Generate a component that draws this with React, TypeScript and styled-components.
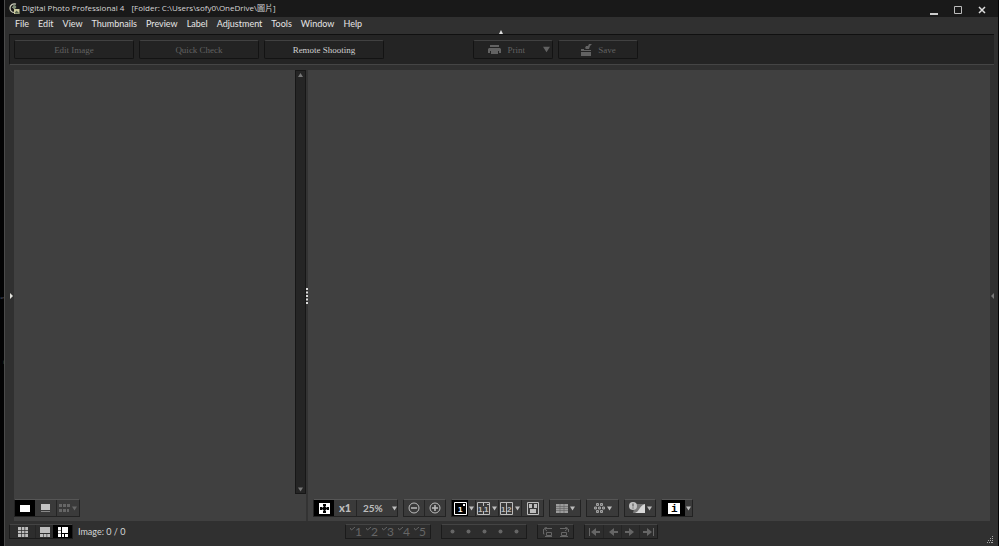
import React from "react";
import styled, { createGlobalStyle, css } from "styled-components";

const Global = createGlobalStyle`
  * { box-sizing: border-box; }
  html, body { margin: 0; background: #000; }
  body { font-family: Lato, "Noto Sans CJK TC", sans-serif; font-size: 9px; color: #d6d6d6; }
  button { font: inherit; color: inherit; padding: 0; margin: 0; border: 0; background: none; }
  svg { display: block; flex: none; }
`;

const Desktop = styled.div`
  min-height: 100vh;
  display: flex;
  background: #030304;
`;
const Behind = styled.div`
  width: 4px;
  flex: none;
  display: flex;
  flex-direction: column;
  align-items: flex-end;
  padding-top: 292px;
  gap: 52px;
  font-size: 4px;
  line-height: 12px;
  color: #6f7688;
`;
const Frame = styled.div`
  flex: 1;
  min-width: 0;
  display: flex;
  flex-direction: column;
  margin-right: 1px;
  border-left: 1px solid #4a4a4a;
  background: #303030;
`;
const TitleBar = styled.header`
  height: 17px;
  display: flex;
  align-items: center;
  gap: 2px;
  padding: 0 10px 0 4px;
  background: #191919;
`;
const Title = styled.h1`
  flex: 1;
  margin: 0;
  padding-bottom: 2px;
  display: flex;
  gap: 7px;
  font-family: "Open Sans", "Noto Sans CJK TC", sans-serif;
  font-size: 8px;
  line-height: 14px;
  font-weight: 400;
  white-space: nowrap;
`;
const WindowButtons = styled.div`
  display: flex;
  gap: 12px;
`;
const WindowButton = styled.button`
  width: 12px;
  height: 15px;
  display: grid;
  place-items: end center;
`;
const MenuBar = styled.nav`
  height: 17px;
  display: flex;
  align-items: center;
  gap: 9px;
  padding: 0 10px 3px;
`;
const MenuItem = styled.button`
  && { font-size: 9px; line-height: 14px; color: #e6e6e6; }
`;
const Ribbon = styled.div`
  position: relative;
  height: 31px;
  margin: 0 4px 5px;
  display: flex;
  align-items: center;
  gap: 5px;
  padding: 0 4px;
  background: #242424;
  border-top: 1px solid #101010;
  border-bottom: 1px solid #454545;
  border-left: 1px solid #151515;
`;
const Collapse = styled.button`
  position: absolute;
  top: -5px;
  left: 50%;
  width: 4px;
  height: 4px;
  && { margin-left: -3px; }
`;
const RibbonButton = styled.button<{ $width: number; $gap?: number; $menu?: boolean }>`
  && {
    width: ${(p) => p.$width}px;
    height: 19px;
    margin-left: ${(p) => p.$gap ?? 0}px;
    display: flex;
    align-items: center;
    justify-content: ${(p) => (p.$menu ? "flex-end" : "center")};
    gap: 6px;
    padding-right: ${(p) => (p.$menu ? 2 : 0)}px;
    border: 1px solid #131313;
    border-top-color: #414141;
    border-radius: 2px;
    background: #232323;
    color: #d0d0d0;
    font-family: "Liberation Serif", serif;
    font-size: 9px;
    line-height: 14px;
  }
  &&:disabled { color: #626262; }
`;
const PrintCaret = styled.span`
  margin-left: 12px;
`;
const Workspace = styled.main`
  flex: 1;
  display: flex;
  margin: 0 4px;
`;
const panel = css`
  display: flex;
  flex-direction: column;
  background: #404040;
`;
const ThumbPanel = styled.section`
  ${panel}
  width: 292px;
  flex: none;
  margin-left: 1px;
`;
const ThumbArea = styled.div`
  flex: 1;
  display: flex;
  justify-content: flex-end;
`;
const ScrollBar = styled.div`
  width: 11px;
  display: flex;
  flex-direction: column;
  justify-content: space-between;
  background: #252525;
  border: 1px solid #171717;
`;
const ScrollButton = styled.button`
  height: 8px;
  display: grid;
  place-items: center;
  && { color: #777; }
`;
const Splitter = styled.div`
  width: 2px;
  flex: none;
  display: flex;
  align-items: center;
  background: #333;
`;
const PreviewPanel = styled.section`
  ${panel}
  flex: 1;
  min-width: 0;
`;
const Canvas = styled.div`
  flex: 1;
`;
const Tools = styled.div<{ $left?: number }>`
  display: flex;
  gap: 5px;
  padding: 5px 0 4px ${(p) => p.$left ?? 0}px;
`;
const Group = styled.div<{ $flat?: boolean; $pad?: number }>`
  display: flex;
  height: ${(p) => (p.$flat ? 15 : 18)}px;
  padding: 0 ${(p) => p.$pad ?? 0}px;
  border: 1px solid ${(p) => (p.$flat ? "#1b1b1b" : "#232323")};
  border-top-color: ${(p) => (p.$flat ? "#444" : "#555")};
  background: ${(p) => (p.$flat ? "#2d2d2d" : "#3a3a3a")};
`;
const Tool = styled.button<{ $width: number; $active?: boolean; $line?: boolean; $tight?: boolean }>`
  && {
    width: ${(p) => p.$width}px;
    display: flex;
    align-items: center;
    justify-content: center;
    gap: ${(p) => (p.$tight ? 0 : 2)}px;
    font-size: 10px;
    line-height: 12px;
    color: ${(p) => (p.$active ? "#fff" : "#bdbdbd")};
    background: ${(p) => (p.$active ? "#000" : "transparent")};
    border-left: ${(p) => (p.$line ? "1px solid #252525" : "0")};
  }
  &&:disabled { color: #666; }
`;
const Zoom = styled.span`
  flex: 1;
  padding-left: 6px;
  font-weight: 700;
  text-align: left;
`;
const Bold = styled.b`
  font-weight: 900;
  font-size: 11px;
`;
const Mark = styled.span`
  font-size: 12px;
`;
const StatusBar = styled.footer`
  height: 25px;
  display: grid;
  grid-template-columns: 1fr auto 1fr;
  align-items: start;
  padding: 3px 4px 0;
`;
const StatusLeft = styled.div`
  display: flex;
  align-items: center;
  gap: 5px;
`;
const StatusCenter = styled.div`
  display: flex;
  gap: 10px;
`;
const Grip = styled.div`
  align-self: end;
  justify-self: end;
  padding-bottom: 3px;
  color: #a8a8a8;
`;
const EdgeHandle = styled.button<{ $dim?: boolean }>`
  width: 4px;
  align-self: center;
  flex: none;
  && { color: ${(p) => (p.$dim ? "#777" : "#e2e2dc")}; }
`;
const Digit = styled.text`
  font: 700 8px "Liberation Sans", sans-serif;
`;

const Caret = ({ w = 5 }: { w?: number }) => (
  <svg width={w} height={w} viewBox="0 0 5 5" aria-hidden="true"><path d="M0 .5h5L2.5 4.5z" fill="currentColor" /></svg>
);
const Logo = () => (
  <svg width="11" height="12" viewBox="0 0 11 12" aria-hidden="true">
    <path d="M7 1.2C4 .2 1 2 1 5s2 4.5 4.5 4.4" fill="none" stroke="#c7c7b4" strokeWidth="1.3" />
    <path d="M5 1v4.5M3 4l3 2" stroke="#97a18e" />
    <circle cx="5.5" cy="4" r="1.8" fill="#7d8b72" />
    <path d="M5 6h5.5v5H5z" fill="#cdcb9c" /><path d="M6 9.5l1.5-2 3 3H6z" fill="#596650" />
  </svg>
);
const Printer = () => (
  <svg width="13" height="10" viewBox="0 0 13 10" aria-hidden="true">
    <path d="M2 0h9v2H2zM1 3h11l1 1v4H0V4z" fill="currentColor" />
    <path d="M2 6h9v4H2z" fill="#232323" /><path d="M3 6h7v3H3z" fill="currentColor" />
  </svg>
);
const SaveIcon = () => (
  <svg width="12" height="12" viewBox="0 0 12 12" fill="currentColor" aria-hidden="true">
    <path d="M1 8h10v4H1zM1 5h3v1h7v1H1zM5 4l1-2h2l1-2 3 0-2 2-1 3H6z" />
  </svg>
);
const Grid = () => (
  <svg width="10" height="10" viewBox="0 0 10 10" fill="currentColor" aria-hidden="true">
    <path d="M0 0h3v3H0zM3.7 0h2.8v3H3.7zM7.2 0H10v3H7.2zM0 3.7h3v2.6H0zM3.7 3.7h2.8v2.6H3.7zM7.2 3.7H10v2.6H7.2zM0 7h3v3H0zM3.7 7h2.8v3H3.7zM7.2 7H10v3H7.2z" />
  </svg>
);
const Below = () => (
  <svg width="10" height="10" viewBox="0 0 10 10" fill="currentColor" aria-hidden="true">
    <path d="M0 0h10v6H0zM0 7h3v3H0zM3.6 7h3v3h-3zM7.2 7H10v3H7.2z" />
  </svg>
);
const Side = () => (
  <svg width="10" height="10" viewBox="0 0 10 10" fill="currentColor" aria-hidden="true">
    <path d="M0 0h3v3H0zM0 3.6h3v2.8H0zM0 7h3v3H0zM4 0h6v6H4zM4 7h2v3H4zM7 7h3v3H7z" />
  </svg>
);
const Single = () => <svg width="10" height="7" aria-hidden="true"><path d="M0 0h10v7H0z" fill="currentColor" /></svg>;
const Captioned = () => (
  <svg width="9" height="8" aria-hidden="true"><path d="M0 0h9v6H0z" fill="#c4c4c4" /><path d="M0 7h9v1H0z" fill="#888" /></svg>
);
const Fit = () => (
  <svg width="11" height="11" viewBox="0 0 11 11" aria-hidden="true">
    <path d="M0 0h11v11H0z" fill="currentColor" />
    <path d="M4 1h3v2l-1 1H5L4 3zM4 10h3V8L6 7H5L4 8zM1 4v3h2l1-1V5L3 4zM10 4v3H8L7 6V5l1-1zM4 4h3v3H4z" fill="#000" />
  </svg>
);
const Circle = ({ plus }: { plus?: boolean }) => (
  <svg width="12" height="12" viewBox="0 0 12 12" fill="none" stroke="currentColor" aria-hidden="true">
    <circle cx="6" cy="6" r="5" /><path d={plus ? "M3 6h6M6 3v6" : "M3 6h6"} strokeWidth="1.5" />
  </svg>
);
const Frame1 = () => (
  <svg width="13" height="13" viewBox="0 0 13 13" fill="currentColor" aria-hidden="true">
    <path d="M.5 .5h12v12H.5z" fill="none" stroke="currentColor" /><Digit x="4" y="10">1</Digit><path d="M9 2h2v2H9z" />
  </svg>
);
const Frame2 = ({ second, dot }: { second: string; dot?: boolean }) => (
  <svg width="13" height="13" viewBox="0 0 13 13" fill="currentColor" aria-hidden="true">
    <path d={dot ? "M.5 .5h12v12H.5zM6.5 0v4M6.5 9v4" : "M.5 .5h12v12H.5zM6.5 0v13"} fill="none" stroke="currentColor" />
    <Digit x="1" y="10">1</Digit><Digit x="7" y="10">{second}</Digit>
    {dot && <path d="M10 2h2v1h-2z" />}
  </svg>
);
const Sync = () => (
  <svg width="12" height="13" viewBox="0 0 12 13" aria-hidden="true">
    <path d="M.5 .5h11v12H.5z" fill="none" stroke="currentColor" /><path d="M2 2h3v4H2zM7 2h3v4H7zM3 7h6v4H3z" fill="currentColor" />
  </svg>
);
const Lines = () => (
  <svg width="12" height="9" viewBox="0 0 12 9" aria-hidden="true">
    <path d="M0 0h12v9H0z" fill="#9c9c9c" /><path d="M0 2.5h12M0 4.5h12M0 6.5h12M4 0v9M8 0v9" stroke="#606060" strokeWidth=".6" />
  </svg>
);
const Focus = () => (
  <svg width="11" height="10" viewBox="0 0 11 10" fill="#6a6a6a" stroke="#a2a2a2" aria-hidden="true">
    <path d="M2.5 .5h2v2h-2zM6.5 .5h2v2h-2zM.5 4h2v2h-2zM4.5 4h2v2h-2zM8.5 4h2v2h-2zM2.5 7.5h2v2h-2zM6.5 7.5h2v2h-2z" />
  </svg>
);
const Warning = () => (
  <svg width="16" height="12" viewBox="0 0 16 12" aria-hidden="true">
    <path d="M6 2h10v9H4z" fill="#777" /><path d="M16 2v9H5c5 0 5-7 11-9z" fill="#d8d8d8" />
    <circle cx="4" cy="4" r="4" fill="#c2c2c2" /><path d="M4 1.5v3M4 5.5v1" stroke="#444" />
  </svg>
);
const Info = () => (
  <svg width="12" height="11" viewBox="0 0 12 11" aria-hidden="true">
    <path d="M0 0h12v11H0z" fill="#fff" /><text x="3" y="9" fill="#000" fontFamily="Liberation Mono, monospace" fontSize="11" fontWeight="700">i</text>
  </svg>
);
const MiniThumbs = () => (
  <svg width="11" height="8" viewBox="0 0 11 8" aria-hidden="true"><path d="M0 0h3v3H0zM4 0h3v3H4zM8 0h3v3H8zM0 5h3v3H0zM4 5h3v3H4zM8 5h2v3H8z" fill="currentColor" /></svg>
);
const Tick = () => (
  <svg width="5" height="9" viewBox="0 0 5 9" fill="none" stroke="currentColor" aria-hidden="true"><path d="M0 1l1.5 2L5 0" /></svg>
);
const Dot = () => <svg width="5" height="5" aria-hidden="true"><circle cx="2.5" cy="2.5" r="2" fill="currentColor" /></svg>;
const Rotate = ({ right }: { right?: boolean }) => (
  <svg width="11" height="10" viewBox="0 0 11 10" fill="none" stroke="currentColor" aria-hidden="true">
    {right ? <path d="M1 1.5h7M6 0l3 1.5L6 4M9.5 2v3M2.5 5.5h5v3h-5zM1 9.5h8" /> : <path d="M10 1.5H3M5 0L2 1.5 5 4M1.5 2v5h1M4.5 5.5h5v3h-5zM3 9.5h7" />}
  </svg>
);
const Nav = ({ right, end }: { right?: boolean; end?: boolean }) => (
  <svg width="11" height="8" viewBox="0 0 11 8" fill="currentColor" aria-hidden="true">
    <path d={right ? "M0 3h4V0l5 4-5 4V5H0z" : "M11 3H7V0L2 4l5 4V5h4z"} />{end && <path d={right ? "M10 0h1v8h-1z" : "M0 0h1v8H0z"} />}
  </svg>
);

const menus = ["File", "Edit", "View", "Thumbnails", "Preview", "Label", "Adjustment", "Tools", "Window", "Help"];
const marks = [1, 2, 3, 4, 5];

export default function App() {
  return (
    <Desktop>
      <Global />
      <Behind aria-hidden="true"><span>er</span><span>|</span></Behind>
      <Frame>
        <TitleBar>
          <Logo />
          <Title><span>Digital Photo Professional 4</span><span>[Folder: C:\Users\sofy0\OneDrive\圖片]</span></Title>
          <WindowButtons>
            <WindowButton aria-label="Minimize"><svg width="8" height="8" stroke="#ccc" fill="none"><path d="M0 6h8" strokeWidth="2" /></svg></WindowButton>
            <WindowButton aria-label="Maximize"><svg width="9" height="11" stroke="#bbb" fill="none"><path d="M.5 1.5h7v7h-7z" /></svg></WindowButton>
            <WindowButton aria-label="Close"><svg width="8" height="10" stroke="#ddd" fill="none"><path d="M1 1l6 6M7 1L1 7" strokeWidth="1.5" /></svg></WindowButton>
          </WindowButtons>
        </TitleBar>
        <MenuBar>{menus.map((m) => <MenuItem key={m}>{m}</MenuItem>)}</MenuBar>
        <Ribbon>
          <RibbonButton $width={120} disabled>Edit Image</RibbonButton>
          <RibbonButton $width={120} disabled>Quick Check</RibbonButton>
          <RibbonButton $width={120}>Remote Shooting</RibbonButton>
          <RibbonButton $width={80} $gap={84} $menu disabled><Printer />Print<PrintCaret><Caret w={7} /></PrintCaret></RibbonButton>
          <RibbonButton $width={80} disabled><SaveIcon />Save</RibbonButton>
          <Collapse aria-label="Collapse toolbar"><svg width="4" height="4"><path d="M2 0l2 4H0z" fill="#ddd" /></svg></Collapse>
        </Ribbon>
        <Workspace>
          <EdgeHandle aria-label="Show folders"><svg width="4" height="6"><path d="M1 0l3 3-3 3z" fill="currentColor" /></svg></EdgeHandle>
          <ThumbPanel>
            <ThumbArea>
              <ScrollBar>
                <ScrollButton aria-label="Scroll up"><svg width="5" height="4"><path d="M2.5 0L5 4H0z" fill="currentColor" /></svg></ScrollButton>
                <ScrollButton aria-label="Scroll down"><Caret /></ScrollButton>
              </ScrollBar>
            </ThumbArea>
            <Tools>
              <Group>
                <Tool $width={20} $active aria-label="Thumbnail"><Single /></Tool>
                <Tool $width={21} aria-label="Thumbnail with information"><Captioned /></Tool>
                <Tool $width={23} $line disabled aria-label="Thumbnail size"><MiniThumbs /><Caret /></Tool>
              </Group>
            </Tools>
          </ThumbPanel>
          <Splitter><svg width="2" height="16" fill="#ddd"><path d="M0 0h2v2H0zM0 3.5h2v2H0zM0 7h2v2H0zM0 10.5h2v2H0zM0 14h2v2H0z" /></svg></Splitter>
          <PreviewPanel>
            <Canvas />
            <Tools $left={5}>
              <Group>
                <Tool $width={20} $active aria-label="Fit to window"><Fit /></Tool>
                <Tool $width={22}><Bold>x1</Bold></Tool>
                <Tool $width={41} $line><Zoom>25%</Zoom><Caret /></Tool>
              </Group>
              <Group>
                <Tool $width={20} aria-label="Zoom out"><Circle /></Tool>
                <Tool $width={21} $line aria-label="Zoom in"><Circle plus /></Tool>
              </Group>
              <Group>
                <Tool $width={16} $active aria-label="Single view"><Frame1 /></Tool>
                <Tool $width={7} aria-label="Single view options"><Caret /></Tool>
                <Tool $width={23} $line aria-label="Before and after"><Frame2 second="1" dot /><Caret /></Tool>
                <Tool $width={23} $line aria-label="Compare two"><Frame2 second="2" /><Caret /></Tool>
                <Tool $width={22} $line aria-label="Synchronize"><Sync /></Tool>
              </Group>
              <Group><Tool $width={30} aria-label="Grid"><Lines /><Caret /></Tool></Group>
              <Group><Tool $width={31} aria-label="AF points"><Focus /><Caret /></Tool></Group>
              <Group><Tool $width={30} aria-label="Exposure warning"><Warning /><Caret /></Tool></Group>
              <Group>
                <Tool $width={23} $active aria-label="Information"><Info /></Tool>
                <Tool $width={7} aria-label="Information options"><Caret /></Tool>
              </Group>
            </Tools>
          </PreviewPanel>
          <EdgeHandle $dim aria-label="Show tools"><svg width="4" height="6"><path d="M4 0L1 3l3 3z" fill="currentColor" /></svg></EdgeHandle>
        </Workspace>
        <StatusBar>
          <StatusLeft>
            <Group $flat>
              <Tool $width={25} aria-label="Thumbnails only"><Grid /></Tool>
              <Tool $width={18} $line aria-label="Thumbnails below"><Below /></Tool>
              <Tool $width={19} $active aria-label="Thumbnails at side"><Side /></Tool>
            </Group>
            <span>Image: 0 / 0</span>
          </StatusLeft>
          <StatusCenter>
            <Group $flat $pad={2}>{marks.map((n) => <Tool key={n} $width={16} $tight disabled><Tick /><Mark>{n}</Mark></Tool>)}</Group>
            <Group $flat $pad={2}>{marks.map((n) => <Tool key={n} $width={16} disabled aria-label={`Rating ${n}`}><Dot /></Tool>)}</Group>
            <Group $flat>
              <Tool $width={18} disabled aria-label="Rotate left"><Rotate /></Tool>
              <Tool $width={17} disabled aria-label="Rotate right"><Rotate right /></Tool>
            </Group>
            <Group $flat>
              <Tool $width={18} disabled aria-label="First"><Nav end /></Tool>
              <Tool $width={18} $line disabled aria-label="Previous"><Nav /></Tool>
              <Tool $width={18} $line disabled aria-label="Next"><Nav right /></Tool>
              <Tool $width={18} $line disabled aria-label="Last"><Nav right end /></Tool>
            </Group>
          </StatusCenter>
          <Grip><svg width="7" height="7" fill="currentColor"><path d="M5 0h1v1H5zM3 2h1v1H3zM5 2h1v1H5zM1 4h1v1H1zM3 4h1v1H3zM5 4h1v1H5zM0 6h1v1H0zM2 6h1v1H2zM4 6h2v1H4z" /></svg></Grip>
        </StatusBar>
      </Frame>
    </Desktop>
  );
}
